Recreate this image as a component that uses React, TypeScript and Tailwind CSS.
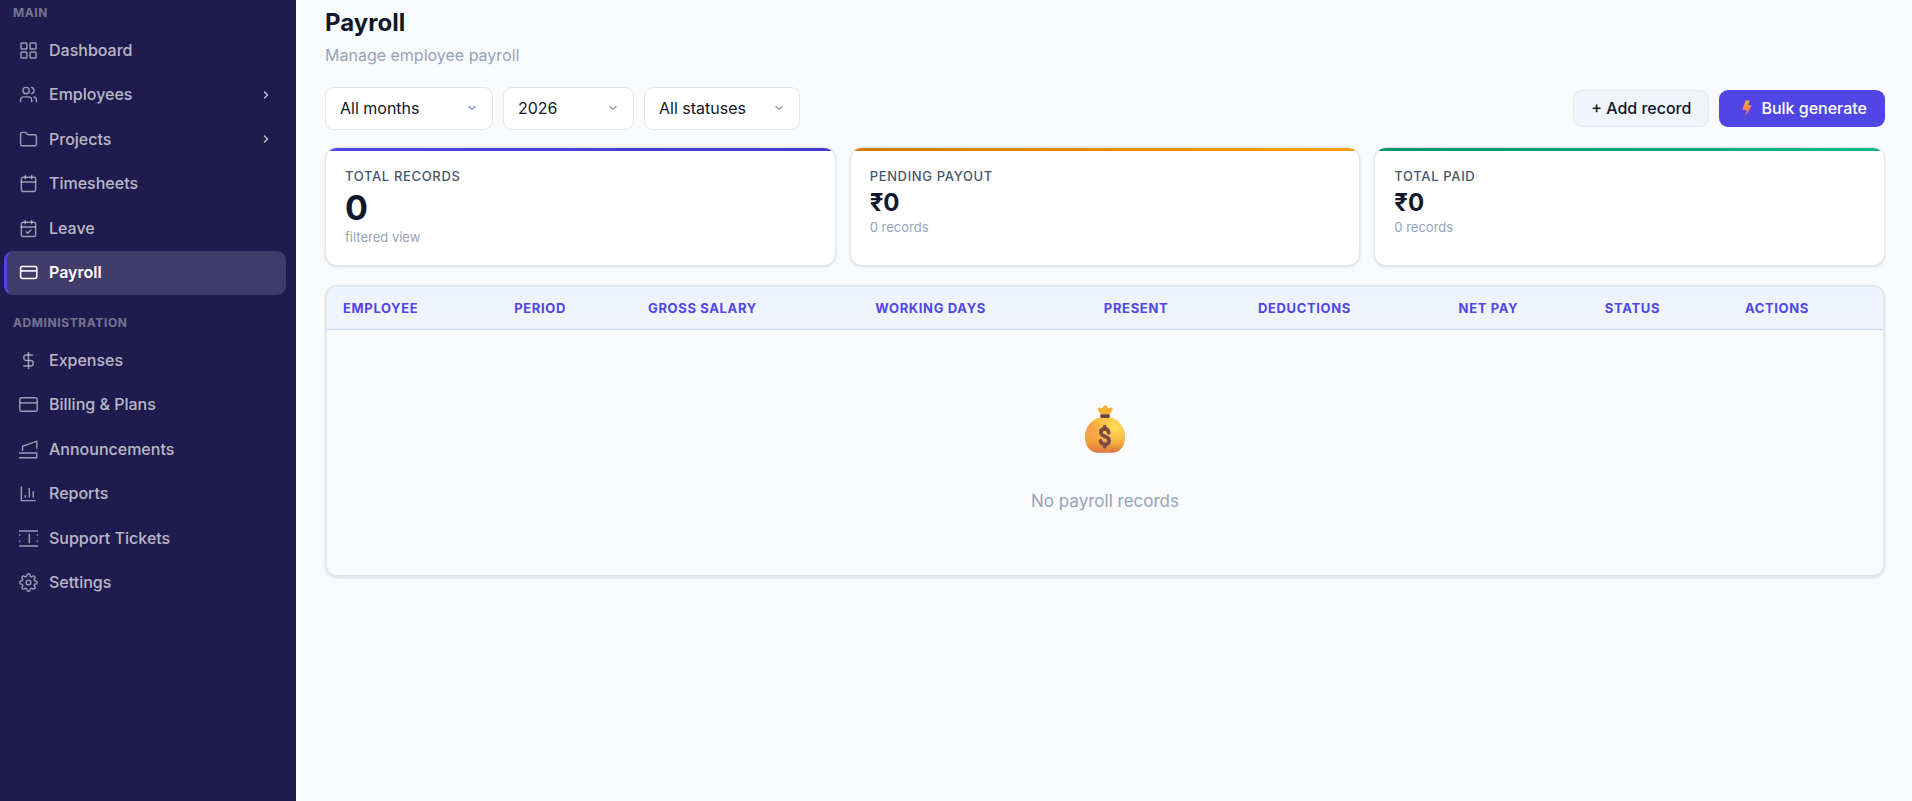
import React, { useState } from 'react';
import { Calendar, CalendarCheck, ChevronDown, ChevronRight, DollarSign, Folder, Users } from 'lucide-react';
import { FiSettings } from 'react-icons/fi';

interface NavItem {
  label: string;
  icon: React.ReactNode;
  active?: boolean;
  expandable?: boolean;
}

interface Stat {
  label: string;
  value: string;
  hint: string;
  bar: string;
  valueClass: string;
}

interface FilterProps {
  label: string;
  options: string[];
  width: string;
  value: string;
  onChange: (value: string) => void;
}

const Glyph: React.FC<{ children: React.ReactNode; strokeWidth?: number }> = ({ children, strokeWidth = 1.8 }) => (
  <svg viewBox="0 0 24 24" className="size-[19px] shrink-0" fill="none" stroke="currentColor" strokeWidth={strokeWidth}>
    {children}
  </svg>
);

const ICON = 'size-[19px] shrink-0';

const MAIN_ITEMS: NavItem[] = [
  {
    label: 'Dashboard',
    icon: (
      <Glyph>
        <rect x="2.5" y="2.5" width="7.5" height="7.5" rx="1" />
        <rect x="14" y="2.5" width="7.5" height="7.5" rx="1" />
        <rect x="2.5" y="14" width="7.5" height="7.5" rx="1" />
        <rect x="14" y="14" width="7.5" height="7.5" rx="1" />
      </Glyph>
    ),
  },
  { label: 'Employees', icon: <Users className={ICON} strokeWidth={1.8} />, expandable: true },
  { label: 'Projects', icon: <Folder className={ICON} strokeWidth={1.8} />, expandable: true },
  { label: 'Timesheets', icon: <Calendar className={ICON} strokeWidth={1.8} /> },
  { label: 'Leave', icon: <CalendarCheck className={ICON} strokeWidth={1.8} /> },
  {
    label: 'Payroll',
    active: true,
    icon: (
      <Glyph strokeWidth={2}>
        <rect x="2" y="4.5" width="20.5" height="15" rx="2" />
        <path d="M2 10h20.5" />
      </Glyph>
    ),
  },
];

const ADMIN_ITEMS: NavItem[] = [
  { label: 'Expenses', icon: <DollarSign className={ICON} strokeWidth={1.8} /> },
  {
    label: 'Billing & Plans',
    icon: (
      <Glyph>
        <rect x="1" y="3.5" width="22" height="17" rx="2" />
        <path d="M1 10h22" />
      </Glyph>
    ),
  },
  {
    label: 'Announcements',
    icon: (
      <Glyph>
        <path d="M4.5 14V8L22.5 1.5V11" />
        <path d="M0 16.5h22.5v6H0" />
      </Glyph>
    ),
  },
  {
    label: 'Reports',
    icon: (
      <Glyph>
        <path d="M3 3v18h18" />
        <path d="M8 17v-3M13 17V5M18 17V9" />
      </Glyph>
    ),
  },
  {
    label: 'Support Tickets',
    icon: (
      <Glyph>
        <path d="M0 2.5h24M0 21.5h24M13 6v12" />
        <path d="M.8 6.5v2M.8 14.5v2M23.2 6.5v2M23.2 14.5v2" />
      </Glyph>
    ),
  },
  { label: 'Settings', icon: <FiSettings className={ICON} strokeWidth={1.8} /> },
];

const STATS: Stat[] = [
  { label: 'Total records', value: '0', hint: 'filtered view', bar: 'from-[#4f46e5] to-[#4338ca]', valueClass: 'text-[34px] leading-[42px]' },
  { label: 'Pending payout', value: '₹0', hint: '0 records', bar: 'from-[#d97706] to-[#f59e0b]', valueClass: 'text-2xl leading-8' },
  { label: 'Total paid', value: '₹0', hint: '0 records', bar: 'from-[#059669] to-[#10b981]', valueClass: 'text-2xl leading-8' },
];

const COLUMNS = [
  { label: 'Employee', width: 'w-[11%]' },
  { label: 'Period', width: 'w-[8.6%]' },
  { label: 'Gross salary', width: 'w-[14.6%]' },
  { label: 'Working days', width: 'w-[14.7%]' },
  { label: 'Present', width: 'w-[9.9%]' },
  { label: 'Deductions', width: 'w-[12.9%]' },
  { label: 'Net pay', width: 'w-[9.4%]' },
  { label: 'Status', width: 'w-[9%]' },
  { label: 'Actions', width: 'w-[9.9%]' },
];

const NavGroup: React.FC<{ title: string; items: NavItem[] }> = ({ title, items }) => (
  <section>
    <h2 className="h-7 pl-[13px] text-xs leading-[25px] font-bold tracking-wider uppercase text-white/40">{title}</h2>
    <ul className="grid h-[267px] auto-rows-fr pl-1 pr-[10px]">
      {items.map((item) => (
        <li key={item.label}>
          <a
            href="#"
            aria-current={item.active ? 'page' : undefined}
            className={`flex h-11 items-center gap-[11px] rounded-[9px] border-l-[3px] px-3 text-base ${
              item.active ? 'border-[#4f46e5] bg-[#403b69] font-semibold text-white' : 'border-transparent font-medium text-white/70'
            }`}
          >
            <span className={item.active ? '' : 'opacity-80'}>{item.icon}</span>
            <span className="flex-1 pb-px">{item.label}</span>
            {item.expandable && <ChevronRight className="mr-0.5 size-3" strokeWidth={3} />}
          </a>
        </li>
      ))}
    </ul>
  </section>
);

const Filter: React.FC<FilterProps> = ({ label, options, width, value, onChange }) => (
  <div className={`relative ${width}`}>
    <select
      aria-label={label}
      value={value}
      onChange={(e) => onChange(e.target.value)}
      className="h-[43px] w-full appearance-none rounded-[9px] border border-[#e2e8f0] bg-white pb-px pl-[14px] pr-8 text-base text-[#0f172a]"
    >
      {options.map((option) => (
        <option key={option}>{option}</option>
      ))}
    </select>
    <ChevronDown className="pointer-events-none absolute top-[15px] right-[15px] size-3 text-[#94a3b8]" strokeWidth={3} />
  </div>
);

const Bolt: React.FC = () => (
  <svg viewBox="0 0 10 16" className="mx-[5px] h-4 w-[10px]">
    <defs>
      <linearGradient id="bolt" x1="0" y1="0" x2="0" y2="1">
        <stop offset="0" stopColor="#fcb43c" />
        <stop offset="1" stopColor="#f5586a" />
      </linearGradient>
    </defs>
    <path d="M4.2.5h3.4L6.2 5.2h2.9c.5 0 .6.4.4.7L4.4 15.2c-.3.5-.9.3-.8-.3l.9-5H1.2c-.5 0-.7-.4-.6-.8L3.4 1c.1-.3.4-.5.8-.5z" fill="url(#bolt)" />
  </svg>
);

const BAG_BODY = 'M46 37H75C102 42 121 68 121 96C121 127 103 143 84 143H37C18 143 0 127 0 96C0 68 19 42 46 37z';

const MoneyBag: React.FC = () => (
  <svg viewBox="0 0 121 143" className="h-12 w-10">
    <defs>
      <linearGradient id="bag" x1="0" y1="0" x2="0" y2="1">
        <stop offset="0" stopColor="#f8b83a" />
        <stop offset="0.7" stopColor="#f1a03c" />
        <stop offset="1" stopColor="#d9743f" />
      </linearGradient>
      <radialGradient id="shine" cx="0.75" cy="0.3" r="0.6">
        <stop offset="0" stopColor="#ffdc5c" />
        <stop offset="1" stopColor="#ffd84f" stopOpacity="0" />
      </radialGradient>
      <radialGradient id="blush" cx="0.05" cy="0.35" r="0.35">
        <stop offset="0" stopColor="#f79a55" />
        <stop offset="1" stopColor="#f79a55" stopOpacity="0" />
      </radialGradient>
    </defs>
    <path d="M48 28 39 13c-2-4 2-7 6-6l7 2 6-8c2-2 4-2 6 0l6 8 7-2c4-1 8 2 6 6l-9 15z" fill="#f9ae35" />
    <path d={BAG_BODY} fill="url(#bag)" />
    <path d={BAG_BODY} fill="url(#shine)" />
    <path d={BAG_BODY} fill="url(#blush)" />
    <rect x="46" y="27" width="29" height="11" rx="4" fill="#6d4543" />
    <path d="M72 83c-1-8-5-12-12-12s-12 4-12 11c0 15 25 9 25 24 0 8-5 12-13 12s-12-4-13-11M60 64v7M60 118v7" fill="none" stroke="#7d4a45" strokeWidth="11" strokeLinecap="round" />
  </svg>
);

const App: React.FC = () => {
  const [month, setMonth] = useState('All months');
  const [year, setYear] = useState('2026');
  const [status, setStatus] = useState('All statuses');

  return (
    <div className="flex min-h-screen bg-[#f9fafc] font-['Inter',sans-serif] text-[#0f172a]">
      {/* Sidebar */}
      <aside className="w-[296px] shrink-0 bg-[#1f1b4e]">
        <nav className="flex flex-col gap-[15px]">
          <NavGroup title="Main" items={MAIN_ITEMS} />
          <NavGroup title="Administration" items={ADMIN_ITEMS} />
        </nav>
      </aside>

      <main className="min-w-0 flex-1 pt-[7px] pr-[27px] pl-[29px]">
        <h1 className="text-2xl font-bold">Payroll</h1>
        <p className="mt-1 text-base text-[#94a3b8]">Manage employee payroll</p>

        {/* Filters */}
        <div className="mt-5 flex items-center justify-between">
          <div className="flex gap-[10px]">
            <Filter label="Month" width="w-[168px]" value={month} onChange={setMonth} options={['All months', 'January', 'February', 'March']} />
            <Filter label="Year" width="w-[131px]" value={year} onChange={setYear} options={['2026', '2025', '2024']} />
            <Filter label="Status" width="w-[156px]" value={status} onChange={setStatus} options={['All statuses', 'Pending', 'Paid']} />
          </div>
          <div className="flex gap-[10px]">
            <button type="button" className="h-[37px] rounded-[9px] border border-[#e2e8f0] bg-[#f1f5f9] px-[17px] pb-px text-base font-medium">
              + Add record
            </button>
            <button type="button" className="flex h-[37px] items-center gap-1 rounded-[9px] bg-[#4f46e5] px-[18px] pb-px text-base font-medium text-white">
              <Bolt />
              Bulk generate
            </button>
          </div>
        </div>

        {/* Stats */}
        <div className="mt-[17px] grid grid-cols-3 gap-[14px]">
          {STATS.map((stat) => (
            <div key={stat.label} className="h-[119px] overflow-hidden rounded-xl border border-[#e2e8f0] bg-white shadow-sm">
              <div className={`h-[3px] bg-linear-to-r ${stat.bar}`} />
              <div className="px-[19px] pt-[14px]">
                <p className="text-[13px] leading-[22px] font-medium tracking-wider uppercase text-[#475569]">{stat.label}</p>
                <p className={`font-bold ${stat.valueClass}`}>{stat.value}</p>
                <p className="text-[13px] leading-4 text-[#94a3b8]">{stat.hint}</p>
              </div>
            </div>
          ))}
        </div>

        {/* Records */}
        <div className="mt-[19px] overflow-hidden rounded-xl border-2 border-[#e2e8f0] shadow-sm">
          <table className="w-full table-fixed border-collapse">
            <thead>
              <tr className="border-b border-[#c7d2fe] bg-linear-to-b from-[#eef2ff] to-[#f1f5f9]">
                {COLUMNS.map((column) => (
                  <th key={column.label} className={`h-[42px] px-4 pt-0.5 text-left text-[13px] font-bold tracking-wider whitespace-nowrap uppercase text-[#4f46e5] ${column.width}`}>
                    {column.label}
                  </th>
                ))}
              </tr>
            </thead>
            <tbody>
              <tr>
                <td colSpan={9} className="pt-[75px] pb-[62px]">
                  <div className="flex flex-col items-center gap-9">
                    <MoneyBag />
                    <p className="text-[17px] leading-6 text-[#94a3b8]">No payroll records</p>
                  </div>
                </td>
              </tr>
            </tbody>
          </table>
        </div>
      </main>
    </div>
  );
};

export default App;
